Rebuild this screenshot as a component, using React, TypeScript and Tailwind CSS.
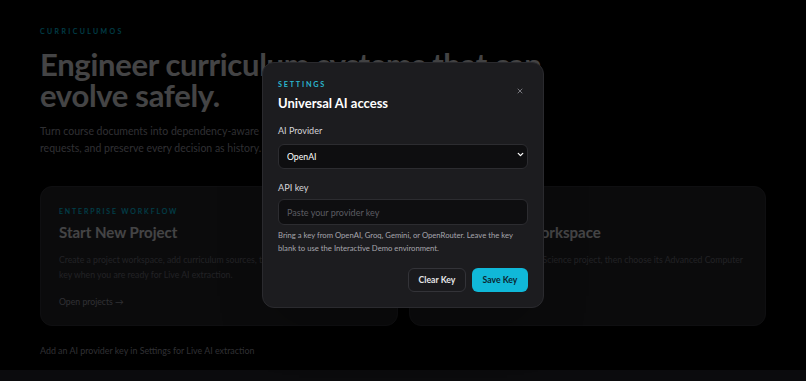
import React from "react";
import { ChevronDown, X } from "lucide-react";

export default function App() {
  return (
    <div className="relative h-[381px] w-[806px] overflow-hidden bg-black font-['Lato',sans-serif]">
      {/* underlying page */}
      <div className="flex h-full flex-col">
        <div className="flex flex-1 flex-col px-10 pt-[25px]">
          <div className="text-[7px] font-semibold uppercase leading-[12px] tracking-[0.34em] text-cyan-400">CurriculumOS</div>
          <h1 className="mt-[12px] text-[31px] font-bold leading-[31px] tracking-[-0.01em] text-zinc-200">
            Engineer curriculum systems that can
            <br />
            evolve safely.
          </h1>
          <p className="mt-[12px] max-w-[505px] text-[10.5px] leading-[17px] text-zinc-400">
            Turn course documents into dependency-aware curriculum graphs, review proposed changes and change requests, and preserve every decision as history.
          </p>
          <div className="mt-[29px] grid grid-cols-2 gap-[11px]">
            <div className="h-[140px] rounded-xl border border-[#34343a] bg-[#26262a] px-[18px] pt-[19px]">
              <div className="text-[7px] font-semibold uppercase leading-[11px] tracking-[0.26em] text-cyan-400">Enterprise Workflow</div>
              <div className="mt-[4px] text-[15px] font-bold leading-[22px] text-zinc-200">Start New Project</div>
              <p className="mt-[9px] max-w-[288px] text-[8.7px] leading-[15px] text-zinc-500">
                Create a project workspace, add curriculum sources, then add a provider key when you are ready for Live AI extraction.
              </p>
              <div className="mt-[13px] text-[8.7px] leading-[14px] text-zinc-400">Open projects →</div>
            </div>
            <div className="h-[140px] rounded-xl border border-[#34343a] bg-[#26262a] px-[18px] pt-[19px]">
              <div className="text-[7px] font-semibold uppercase leading-[11px] tracking-[0.26em] text-cyan-400">Interactive Demo</div>
              <div className="mt-[4px] text-[15px] font-bold leading-[22px] text-zinc-200">Explore Demo Workspace</div>
              <p className="mt-[9px] text-[8.7px] leading-[15px] text-zinc-500">
                Explore the sample Computer Science project, then choose its Advanced Computer Science track.
              </p>
              <div className="mt-[13px] text-[8.7px] leading-[14px] text-zinc-400">Open demo →</div>
            </div>
          </div>
          <div className="mt-[18px] text-[8.9px] leading-[14px] text-zinc-400">Add an AI provider key in Settings for Live AI extraction</div>
        </div>
        <div className="h-[11px] bg-[#25252c]" />
      </div>

      {/* overlay */}
      <div className="absolute inset-0 bg-black/70" />

      {/* modal */}
      <div className="absolute inset-0 flex items-center justify-center pb-[11px]">
        <div className="relative w-[282px] rounded-[12px] border border-[#2a2a2e] bg-[#1c1c1f] px-[15px] pb-[15px] pt-[15px] shadow-2xl">
          <button className="absolute right-[19px] top-[24px] text-[#8a8a90]">
            <X size={8} strokeWidth={2.5} />
          </button>
          <div className="text-[7.3px] font-bold uppercase leading-[13px] tracking-[0.24em] text-[#2ab7d0]">Settings</div>
          <div className="mt-[2px] text-[13px] font-bold leading-[20px] text-white">Universal AI access</div>

          <div className="mt-[11px] text-[9px] leading-[14px] text-[#d4d4d8]">AI Provider</div>
          <div className="relative mt-[4px]">
            <select className="h-[25px] w-full appearance-none rounded-[6px] border border-[#2c2c30] bg-[#0e0e10] px-[8px] text-[8.7px] text-white outline-none">
              <option>OpenAI</option>
            </select>
            <ChevronDown size={9} strokeWidth={3.5} className="pointer-events-none absolute right-[3px] top-[8px] text-white" />
          </div>

          <div className="mt-[12px] text-[9.2px] leading-[14px] text-[#d4d4d8]">API key</div>
          <input
            className="mt-[4px] h-[26px] w-full rounded-[6px] border border-[#2c2c30] bg-[#0e0e10] px-[8px] text-[9px] text-white outline-none placeholder:text-[#5c5c62]"
            placeholder="Paste your provider key"
          />
          <p className="mt-[4px] whitespace-nowrap text-[7.7px] leading-[13px] text-[#a6a6ad]">
            Bring a key from OpenAI, Groq, Gemini, or OpenRouter. Leave the key
            <br />
            blank to use the Interactive Demo environment.
          </p>
          <div className="mt-[13px] flex justify-end gap-[6px]">
            <button className="h-[24px] w-[58px] rounded-[6px] border border-[#333338] bg-[#1a1a1d] text-[8.7px] font-bold text-[#e4e4e7]">
              Clear Key
            </button>
            <button className="h-[24px] w-[56px] rounded-[6px] bg-[#10b8d8] text-[8.7px] font-bold text-[#0b2530]">
              Save Key
            </button>
          </div>
        </div>
      </div>
    </div>
  );
}
